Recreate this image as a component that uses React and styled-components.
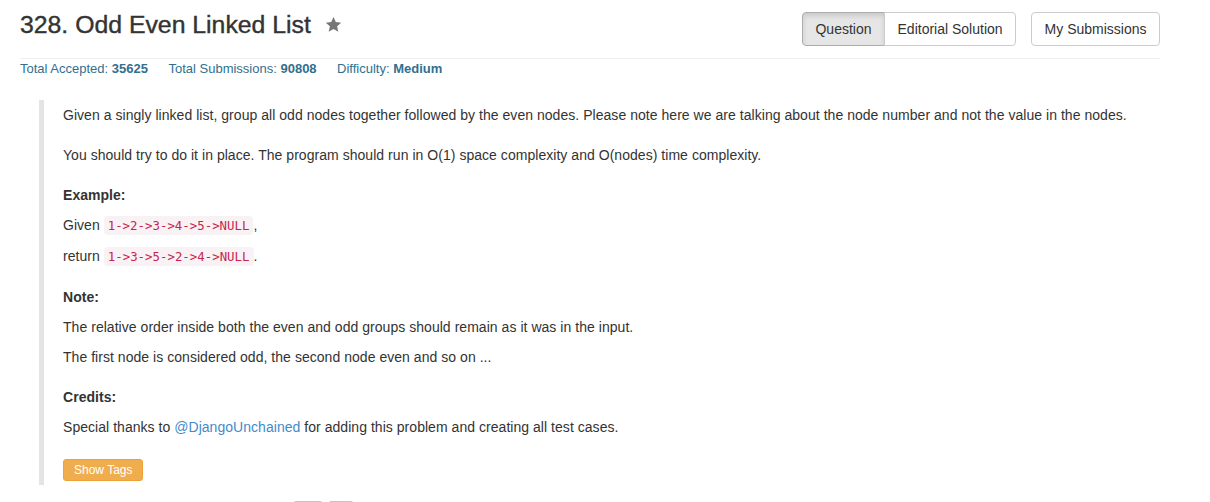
import React from "react";
import styled, { createGlobalStyle } from "styled-components";

const GlobalStyle = createGlobalStyle`
  html, body { margin: 0; padding: 0; background: #fff; }
  body {
    font-family: "Liberation Sans", Arial, sans-serif;
    font-size: 14px;
    color: #333;
  }
`;

const Page = styled.div`
  width: 1140px;
  padding-left: 20px;
`;

const Header = styled.div`
  display: flex;
  justify-content: space-between;
  align-items: flex-start;
  padding: 11px 0 12px;
  border-bottom: 1px solid #eee;
`;

const Title = styled.h3`
  margin: 0;
  display: flex;
  align-items: center;
  gap: 14px;
  font-size: 24.8px;
  line-height: 27.5px;
  font-weight: 500;
  color: #333;
  -webkit-text-stroke: 0.4px #333;
`;

const Star = styled.svg`
  width: 17px;
  height: 17px;
  fill: #777;
  margin-top: -1px;
`;

const Actions = styled.div`
  display: flex;
  gap: 15px;
  margin-top: 1px;
`;

const Group = styled.div`
  display: flex;
`;

const Btn = styled.button`
  font-family: inherit;
  font-size: 14px;
  line-height: 20px;
  padding: 6px 12.5px;
  color: #333;
  background: ${(p) => (p.$active ? "#e6e6e6" : "#fff")};
  border: 1px solid ${(p) => (p.$active ? "#adadad" : "#ccc")};
  box-shadow: ${(p) => (p.$active ? "inset 0 3px 5px rgba(0,0,0,.125)" : "none")};
  border-radius: 4px;
  cursor: pointer;
  ${(p) => p.$first && "border-top-right-radius: 0; border-bottom-right-radius: 0;"}
  ${(p) => p.$last && "border-top-left-radius: 0; border-bottom-left-radius: 0; margin-left: -1px;"}
`;

const Stats = styled.div`
  display: flex;
  gap: 20.5px;
  padding-top: 1px;
  font-size: 13px;
  line-height: 18px;
  color: #31708f;
  b { font-weight: bold; }
`;

const Quote = styled.blockquote`
  margin: 22px 0 0 19px;
  padding: 0 19px 4px;
  border-left: 5px solid #e4e4e4;
`;

const Para = styled.p`
  margin: 0 0 10px;
  line-height: 30px;
  letter-spacing: 0.04px;
`;

const Code = styled.code`
  font-family: "DejaVu Sans Mono", "Liberation Mono", monospace;
  font-size: 12.4px;
  padding: 2px 4px;
  color: #c7254e;
  background: #f9f2f4;
  border-radius: 4px;
  letter-spacing: 0;
`;

const Link = styled.a`
  color: #428bca;
  text-decoration: none;
`;

const TagsRow = styled.div`
  display: flex;
  padding-top: 7px;
`;

const TagButton = styled.button`
  font-family: inherit;
  font-size: 12px;
  line-height: 16px;
  padding: 2px 10px;
  color: #fff;
  background: #f0ad4e;
  border: 1px solid #eea236;
  border-radius: 3px;
  cursor: pointer;
`;

const Footer = styled.div`
  display: flex;
  gap: 5px;
  margin: 16px 0 0 273px;
`;

const SmallBtn = styled.div`
  width: ${(p) => p.$w}px;
  height: 22px;
  border: 1px solid #c4c4c4;
  border-radius: 3px;
  box-sizing: border-box;
`;

export default function App() {
  return (
    <>
      <GlobalStyle />
      <Page>
        <Header>
          <Title>
            328. Odd Even Linked List
            <Star viewBox="0 0 24 24">
              <path d="M12 1.5l3.2 7.1 7.7.8-5.8 5.2 1.7 7.6L12 18.3l-6.8 3.9 1.7-7.6L1.1 9.4l7.7-.8z" />
            </Star>
          </Title>
          <Actions>
            <Group>
              <Btn $active $first>Question</Btn>
              <Btn $last>Editorial Solution</Btn>
            </Group>
            <Btn>My Submissions</Btn>
          </Actions>
        </Header>
        <Stats>
          <span>Total Accepted: <b>35625</b></span>
          <span>Total Submissions: <b>90808</b></span>
          <span>Difficulty: <b>Medium</b></span>
        </Stats>
        <Quote>
          <Para>
            Given a singly linked list, group all odd nodes together followed by the even nodes. Please note here we are talking about the node number and not the value in the nodes.
          </Para>
          <Para>
            You should try to do it in place. The program should run in O(1) space complexity and O(nodes) time complexity.
          </Para>
          <Para>
            <b>Example:</b>
            <br />
            Given <Code>1-&gt;2-&gt;3-&gt;4-&gt;5-&gt;NULL</Code>,
            <br />
            return <Code>1-&gt;3-&gt;5-&gt;2-&gt;4-&gt;NULL</Code>.
          </Para>
          <Para>
            <b>Note:</b>
            <br />
            The relative order inside both the even and odd groups should remain as it was in the input.
            <br />
            The first node is considered odd, the second node even and so on ...
          </Para>
          <Para>
            <b>Credits:</b>
            <br />
            Special thanks to <Link href="#">@DjangoUnchained</Link> for adding this problem and creating all test cases.
          </Para>
          <TagsRow>
            <TagButton>Show Tags</TagButton>
          </TagsRow>
        </Quote>
        <Footer>
          <SmallBtn $w={30} />
          <SmallBtn $w={26} />
        </Footer>
      </Page>
    </>
  );
}
